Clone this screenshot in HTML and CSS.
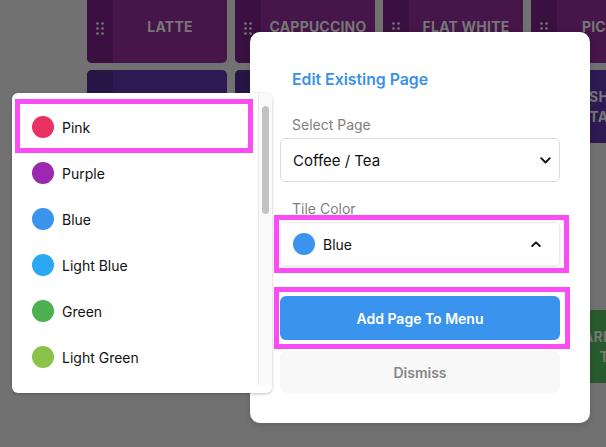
FILE: index.html
```html
<!DOCTYPE html>
<html lang="en">
<head>
    <meta charset="UTF-8">
    <meta name="viewport" content="width=device-width, initial-scale=1.0">
    <title>Edit Existing Page</title>
    <link rel="stylesheet" href="styles.css">
</head>
<body>
    <!-- menu tiles behind the overlay -->
    <div class="tiles">
        <div class="tile purple"><div class="grip"><svg width="8" height="13" viewBox="0 0 8 13"><circle cx="1.5" cy="1.5" r="1.3"/><circle cx="6.5" cy="1.5" r="1.3"/><circle cx="1.5" cy="6.5" r="1.3"/><circle cx="6.5" cy="6.5" r="1.3"/><circle cx="1.5" cy="11.5" r="1.3"/><circle cx="6.5" cy="11.5" r="1.3"/></svg></div><div class="name">LATTE</div></div>
        <div class="tile purple"><div class="grip"><svg width="8" height="13" viewBox="0 0 8 13"><circle cx="1.5" cy="1.5" r="1.3"/><circle cx="6.5" cy="1.5" r="1.3"/><circle cx="1.5" cy="6.5" r="1.3"/><circle cx="6.5" cy="6.5" r="1.3"/><circle cx="1.5" cy="11.5" r="1.3"/><circle cx="6.5" cy="11.5" r="1.3"/></svg></div><div class="name">CAPPUCCINO</div></div>
        <div class="tile purple"><div class="grip"><svg width="8" height="13" viewBox="0 0 8 13"><circle cx="1.5" cy="1.5" r="1.3"/><circle cx="6.5" cy="1.5" r="1.3"/><circle cx="1.5" cy="6.5" r="1.3"/><circle cx="6.5" cy="6.5" r="1.3"/><circle cx="1.5" cy="11.5" r="1.3"/><circle cx="6.5" cy="11.5" r="1.3"/></svg></div><div class="name">FLAT WHITE</div></div>
        <div class="tile purple"><div class="grip"><svg width="8" height="13" viewBox="0 0 8 13"><circle cx="1.5" cy="1.5" r="1.3"/><circle cx="6.5" cy="1.5" r="1.3"/><circle cx="1.5" cy="6.5" r="1.3"/><circle cx="6.5" cy="6.5" r="1.3"/><circle cx="1.5" cy="11.5" r="1.3"/><circle cx="6.5" cy="11.5" r="1.3"/></svg></div><div class="name">PICCOLO</div></div>

        <div class="tile indigo"><div class="grip"></div><div class="name">MOCHA</div></div>
        <div class="tile indigo"><div class="grip"></div><div class="name">LONG BLACK</div></div>
        <div class="tile indigo"><div class="grip"></div><div class="name">ESPRESSO</div></div>
        <div class="tile indigo"><div class="grip"></div><div class="name">SHORT<br>TACOS</div></div>

        <div class="slot"></div><div class="slot"></div><div class="slot"></div><div class="slot"></div>
        <div class="slot"></div><div class="slot"></div><div class="slot"></div><div class="slot"></div>

        <div class="slot"></div><div class="slot"></div><div class="slot"></div>
        <div class="tile green"><div class="grip"></div><div class="name">EARL GREY<br>TEA</div></div>
    </div>

    <div class="modal">
        <h2 class="modal-title">Edit Existing Page</h2>

        <div class="field-label">Select Page</div>
        <div class="select-box">
            <span>Coffee / Tea</span>
            <svg class="chev" width="11" height="7" viewBox="0 0 11 7"><path d="M1.2 1.2 L5.5 5.5 L9.8 1.2" fill="none" stroke="#111" stroke-width="1.9" stroke-linecap="round" stroke-linejoin="round"/></svg>
        </div>

        <div class="field-label tile-color">Tile Color</div>
        <div class="color-box">
            <span class="dot blue"></span>
            <span class="color-name">Blue</span>
            <svg class="chev-up" width="10" height="6" viewBox="0 0 10 6"><path d="M1.2 5 L5 1.3 L8.8 5" fill="none" stroke="#111" stroke-width="1.8" stroke-linecap="round" stroke-linejoin="round"/></svg>
        </div>

        <button class="btn-add">Add Page To Menu</button>
        <button class="btn-dismiss">Dismiss</button>
    </div>

    <div class="dropdown">
        <ul class="options">
            <li><span class="dot pink"></span>Pink</li>
            <li><span class="dot purple-dot"></span>Purple</li>
            <li><span class="dot blue"></span>Blue</li>
            <li><span class="dot light-blue"></span>Light Blue</li>
            <li><span class="dot green-dot"></span>Green</li>
            <li><span class="dot light-green"></span>Light Green</li>
        </ul>
        <div class="track"><div class="thumb"></div></div>
    </div>

    <!-- highlight boxes -->
    <div class="mark mark-pink"></div>
    <div class="mark mark-color"></div>
    <div class="mark mark-add"></div>
</body>
</html>
```

FILE: styles.css
```css
body{
    margin: 0;
    background: #717171;
    font-family: Inter, "Noto Sans", sans-serif;
    overflow: hidden;
    height: 447px;
    position: relative;
}

/* tiles */
.tiles{
    display: grid;
    grid-template-columns: repeat(4, 140px);
    grid-auto-rows: 73px;
    gap: 7px 8px;
    width: max-content;
    margin-top: -10px;
    padding-left: 87px;
}

.tile{
    display: flex;
    border-radius: 5px;
    overflow: hidden;
}

.tile .grip{
    width: 26px;
    display: flex;
    justify-content: center;
    align-items: center;
    padding-top: 4px;
    box-sizing: border-box;
}

.tile .grip svg{
    fill: #787878;
}

.tile .name{
    flex: 1;
    display: flex;
    justify-content: center;
    align-items: center;
    text-align: center;
    color: #777777;
    font-weight: 700;
    font-size: 14px;
    line-height: 20px;
    letter-spacing: 0.2px;
}

.purple{ background: #46154a; }
.purple .grip{ background: #3a1040; }
.indigo{ background: #2e1a52; }
.indigo .grip{ background: #271645; }
.green{ background: #275a2c; }
.green .grip{ background: #214d25; }

/* modal */
.modal{
    position: absolute;
    left: 250px;
    top: 32px;
    width: 340px;
    height: 391px;
    box-sizing: border-box;
    padding: 38px 30px 0 30px;
    background: #ffffff;
    border-radius: 10px;
    box-shadow: 0 2px 6px rgba(0,0,0,0.15);
    display: flex;
    flex-direction: column;
}

.modal-title{
    margin: 0 0 25px 12px;
    font-size: 15.8px;
    line-height: 20px;
    font-weight: 600;
    color: #3a90ea;
}

.field-label{
    margin: 0 0 3px 12px;
    font-size: 14px;
    line-height: 20px;
    color: #7f7f7f;
}

.tile-color{
    margin-top: 17px;
}

.select-box{
    height: 44px;
    box-sizing: border-box;
    border: 1px solid #dedede;
    border-radius: 5px;
    display: flex;
    align-items: center;
    justify-content: space-between;
    padding: 0 8px 0 12px;
    font-size: 15px;
    color: #111111;
}

.color-box{
    height: 44px;
    box-sizing: border-box;
    border: 1px solid #ececec;
    border-radius: 5px;
    box-shadow: 0 1px 3px rgba(0,0,0,0.12);
    display: flex;
    align-items: center;
    padding: 0 18px 0 12px;
    font-size: 14px;
    color: #111111;
}

.color-name{
    flex: 1;
    margin-left: 8px;
}

.dot{
    display: inline-block;
    width: 22px;
    height: 22px;
    border-radius: 50%;
    flex: none;
}

.pink{ background: #eb3062; }
.purple-dot{ background: #9c27b0; }
.blue{ background: #3a94ee; }
.light-blue{ background: #2aa8f4; }
.green-dot{ background: #4caf50; }
.light-green{ background: #8bc34a; }

.btn-add{
    margin-top: 30px;
    height: 44px;
    border: none;
    border-radius: 6px;
    background: #3a94ee;
    color: #ffffff;
    font-family: inherit;
    font-size: 14px;
    font-weight: 600;
}

.btn-dismiss{
    margin-top: 11px;
    height: 42px;
    border: none;
    border-radius: 6px;
    background: #f8f8f8;
    color: #868686;
    font-family: inherit;
    font-size: 14px;
    font-weight: 600;
}

/* color dropdown */
.dropdown{
    position: absolute;
    left: 12px;
    top: 93px;
    width: 260px;
    height: 300px;
    background: #ffffff;
    border-radius: 6px;
    box-shadow: 0 1px 3px rgba(0,0,0,0.25);
    display: flex;
}

.options{
    list-style: none;
    margin: 0;
    padding: 11px 9px 0 8px;
    flex: 1;
}

.options li{
    height: 46px;
    display: flex;
    align-items: center;
    padding-left: 12px;
    gap: 8px;
    font-size: 14px;
    color: #111111;
}

.track{
    width: 14px;
    margin-bottom: 8px;
    border-left: 1px solid #e6e6e6;
    background: #fafafa;
    padding: 13px 3px 0 3px;
    box-sizing: border-box;
}

.thumb{
    height: 108px;
    border-radius: 4px;
    background: #c2c2c2;
}

/* highlight boxes */
.mark{
    position: absolute;
    border: 5px solid #fb4bf2;
    box-sizing: border-box;
}

.mark-pink{
    left: 15px;
    top: 99px;
    width: 238px;
    height: 54px;
}

.mark-color{
    left: 274px;
    top: 215px;
    width: 295px;
    height: 58px;
}

.mark-add{
    left: 274px;
    top: 287px;
    width: 296px;
    height: 62px;
}
```
